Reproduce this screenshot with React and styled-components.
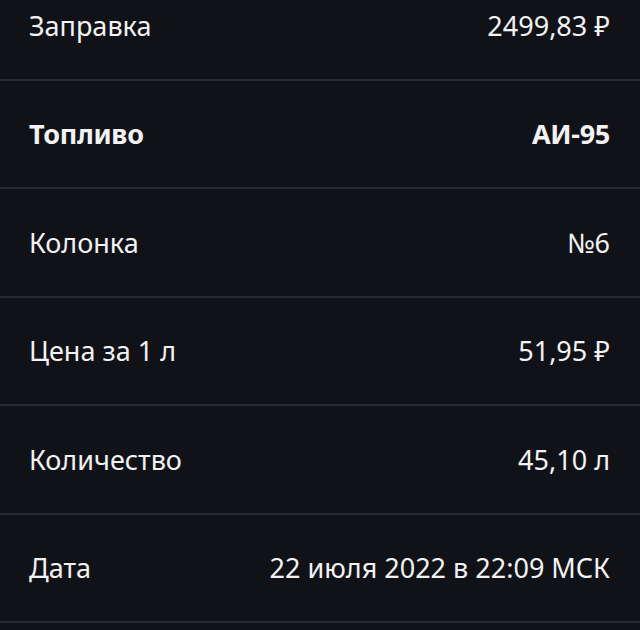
import React from "react";
import styled, { createGlobalStyle } from "styled-components";

const Global = createGlobalStyle`
  html, body { margin: 0; padding: 0; background: #111217; }
  body { overflow: hidden; }
`;

const Page = styled.div`
  width: 640px;
  height: 630px;
  overflow: hidden;
  background: #111217;
  font-family: "Noto Sans", "Open Sans", sans-serif;
  color: #f2f2f4;
`;

const List = styled.div`
  display: flex;
  flex-direction: column;
  margin-top: -28px;
`;

const Row = styled.div`
  box-sizing: border-box;
  height: 108.5px;
  display: flex;
  align-items: center;
  justify-content: space-between;
  padding: 0 30px 0 29px;
  border-bottom: 2px solid #2a2b30;
  font-size: 27px;
  font-weight: ${(p) => (p.$bold ? 700 : 400)};
  letter-spacing: ${(p) => (p.$bold ? "-0.3px" : "0")};
`;

const Label = styled.span`
  white-space: nowrap;
`;

const Value = styled.span`
  white-space: nowrap;
  text-align: right;
`;

const rows = [
  ["Заправка", "2499,83 ₽"],
  ["Топливо", "АИ-95", true],
  ["Колонка", "№6"],
  ["Цена за 1 л", "51,95 ₽"],
  ["Количество", "45,10 л"],
  ["Дата", "22 июля 2022 в 22:09 МСК"],
];

export default function App() {
  return (
    <Page>
      <Global />
      <List>
        {rows.map(([l, v, b]) => (
          <Row key={l} $bold={b}>
            <Label>{l}</Label>
            <Value>{v}</Value>
          </Row>
        ))}
      </List>
    </Page>
  );
}
